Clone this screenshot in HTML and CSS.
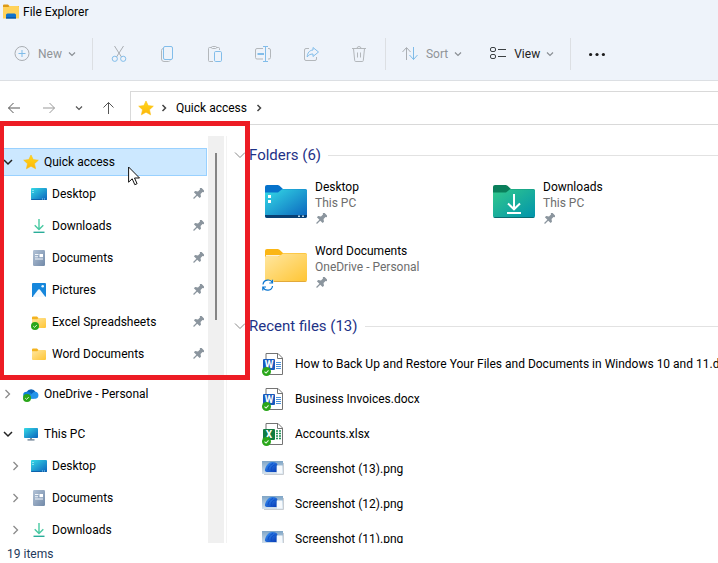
FILE: index.html
```html
<!DOCTYPE html>
<html lang="en">
<head>
    <meta charset="UTF-8">
    <meta name="viewport" content="width=device-width, initial-scale=1.0">
    <title>File Explorer</title>
    <link rel="stylesheet" href="styles.css">
</head>
<body>
    <!-- shared icons -->
    <svg class="sprite" aria-hidden="true">
        <defs>
            <linearGradient id="gBlue" x1="0" y1="0" x2="1" y2="1"><stop offset="0" stop-color="#35dbe6"/><stop offset="1" stop-color="#0a62bd"/></linearGradient>
            <linearGradient id="gGreen" x1="0" y1="0" x2="1" y2="1"><stop offset="0" stop-color="#33c98c"/><stop offset="1" stop-color="#0093ac"/></linearGradient>
            <linearGradient id="gYellow" x1="0" y1="0" x2="1" y2="1"><stop offset="0" stop-color="#ffe7a2"/><stop offset="1" stop-color="#ffc533"/></linearGradient>
            <linearGradient id="gDoc" x1="0" y1="0" x2="1" y2="1"><stop offset="0" stop-color="#b3c3d6"/><stop offset="1" stop-color="#7189a8"/></linearGradient>
            <linearGradient id="gStar" x1="0" y1="0" x2="0" y2="1"><stop offset="0" stop-color="#ffd91a"/><stop offset="1" stop-color="#fdb50a"/></linearGradient>
            <linearGradient id="gSky" x1="0" y1="0" x2="0" y2="1"><stop offset="0" stop-color="#7fa5c6"/><stop offset="1" stop-color="#d6e3ee"/></linearGradient>
            <linearGradient id="gBloom" x1="0" y1="0" x2="1" y2="1"><stop offset="0" stop-color="#3b97f7"/><stop offset="1" stop-color="#0638b4"/></linearGradient>
        </defs>
        <symbol id="down" viewBox="0 0 8 8"><path d="M1 2.5 4 5.5 7 2.5" fill="none" stroke="currentColor" stroke-width="1.2"/></symbol>
        <symbol id="right" viewBox="0 0 8 8"><path d="M2.5 1 5.5 4 2.5 7" fill="none" stroke="currentColor" stroke-width="1.5"/></symbol>
        <symbol id="open" viewBox="0 0 10 10"><path d="M1 3 5 7 9 3" fill="none" stroke="currentColor" stroke-width="1.5"/></symbol>
        <symbol id="closed" viewBox="0 0 10 10"><path d="M2.5 1 6.500 5 2.5 9" fill="none" stroke="currentColor" stroke-width="1.3"/></symbol>
        <symbol id="star" viewBox="0 0 16 16"><path d="M8 1 10.200 5.600 15.300 6.200 11.500 9.700 12.600 14.800 8 12.200 3.400 14.800 4.500 9.700.7 6.200 5.800 5.600z" fill="url(#gStar)" stroke="#fbc012" stroke-width=".6" stroke-linejoin="round"/></symbol>
        <symbol id="pin" viewBox="0 0 12 12"><path transform="rotate(45 6 6)" d="M3.3-.8h5.4v1.6l-.9.6v2.8l2.3 1.7v1.8H6.6v4.6H5.4V7.7H1.9V5.900l2.3-1.7V1.4L3.3.8z" fill="#8b959e"/></symbol>
        <symbol id="desktop" viewBox="0 0 16 16"><rect y="2" width="16" height="12" rx="1" fill="url(#gBlue)"/><path d="M0 13h16v0a1 1 0 0 1-1 1H1a1 1 0 0 1-1-1z" fill="#0d62ac"/><path d="M1.5 4h1v1h-1zM1.5 6h1v1h-1z" fill="#d8fbff"/><path d="M11 12.5h1v1h-1zM13 12.5h1v1h-1z" fill="#8fd0f5"/></symbol>
        <symbol id="downloads" viewBox="0 0 16 16"><path d="M8 1v10.500M3.700 7.200 8 11.400l4.300-4.200" fill="none" stroke="#48c9a2" stroke-width="1.4"/><path d="M2.5 13.600h11v1.400h-11z" fill="#29ad99"/></symbol>
        <symbol id="documents" viewBox="0 0 16 16"><rect x="2" width="12" height="16" rx="1.2" fill="url(#gDoc)"/><path d="M4 4h3.500v1H4zM4 6.200h3v1H4zM4 8.400h8v1H4z" fill="#f4f8fc"/><path d="M8.500 4H12v3.200H8.500z" fill="#fff"/></symbol>
        <symbol id="pictures" viewBox="0 0 16 16"><rect x="1" y="1" width="14" height="14" rx="1" fill="#1687dc"/><path d="M1.500 15 7.300 7.600a1 1 0 0 1 1.500 0L14.500 15z" fill="#f4faff"/><path d="M1 13.500V14a1 1 0 0 0 1 1h.5z" fill="#0b5cad"/><circle cx="11.700" cy="4.300" r="1.300" fill="#e9f5ff"/></symbol>
        <symbol id="folder" viewBox="0 0 16 16"><path d="M1 3.500a1 1 0 0 1 1-1h4L7.500 4H14v3H1z" fill="#f4b31f"/><path d="M1 5.200h5.200l1.300-1.100H14a1 1 0 0 1 1 1V13a1 1 0 0 1-1 1H2a1 1 0 0 1-1-1z" fill="url(#gYellow)"/></symbol>
        <symbol id="synced" viewBox="0 0 8 8"><circle cx="4" cy="4" r="4" fill="#2aa61a"/><path d="M2.200 4.100 3.600 5.400 5.800 3" fill="none" stroke="#e4f8df" stroke-width=".9"/></symbol>
        <symbol id="cloud" viewBox="0 0 16 16"><path d="M3.600 6A5 5 0 0 1 12.600 6L9 9.500z" fill="#0a62b8"/><path d="M3.500 12.500A3.300 3.300 0 0 1 3.600 5.800c1.800-.4 3.200.5 4 1.200l4 5.500z" fill="#1180dc"/><path d="M3 12.700 9.600 7a4 4 0 0 1 2.700-1.200A3.500 3.500 0 0 1 12.700 12.700z" fill="#2494ea"/></symbol>
        <symbol id="pc" viewBox="0 0 16 16"><rect x="1" y="2" width="14" height="10" rx=".8" fill="url(#gBlue)"/><path d="M7 12h2v1.500H7z" fill="#8593a1"/><path d="M4.500 13.300h7v1.200h-7z" fill="#5b7186"/></symbol>
        <symbol id="page" viewBox="0 0 22 24"><path d="M4 1.500h12l4.500 4.500v16.500H4z" fill="#fff" stroke="#747474"/><path d="M15.500 1.500v5h5" fill="none" stroke="#747474"/></symbol>
        <symbol id="shot" viewBox="0 0 22 24"><path d="M2 17.500h19.500V6" fill="none" stroke="#c9cdd2"/><rect y="4" width="21" height="13" fill="url(#gSky)"/><path d="M15 8.500h5.500v8H15z" fill="#f7fafd"/><path d="M3 12.500C4 8 7 5.200 10 5c3-.2 5 .8 5.500 2.500L14.500 9v6H5c-1.500 0-2.400-1-2-2.500z" fill="url(#gBloom)"/><path d="M9.500 14c-1-3 1-6 4-6M6 13c0-3 2-5.500 5-6.500" fill="none" stroke="#0a49c4" stroke-width=".8"/></symbol>
    </svg>

    <div class="window">
        <header class="top">
            <div class="titlebar">
                <svg class="icon" viewBox="0 0 16 16"><path d="M0 1.500a1 1 0 0 1 1-1h4L6.500 2H16v5H0z" fill="#dd9a17"/><path d="M0 3h5.500l1-1H15a1 1 0 0 1 1 1v11.500H0z" fill="#ffd25a"/><path d="M3 14.500V11a1.500 1.500 0 0 1 1.500-1.500h7A1.500 1.500 0 0 1 13 11v3.500z" fill="#0f74cf"/><path d="M3 13h10v1.500H3z" fill="#0a5bb0"/></svg>
                <span>File Explorer</span>
            </div>
            <div class="toolbar">
                <button class="command dim">
                    <svg class="icon" viewBox="0 0 16 16" fill="none"><circle cx="8" cy="7.500" r="7" stroke="#a9adb2"/><path d="M8 4v7M4.500 7.500h7" stroke="#7fbbe8"/></svg>
                    New
                    <svg class="chevron"><use href="#down"/></svg>
                </button>
                <span class="separator"></span>
                <button class="tool" aria-label="Cut"><svg class="icon" viewBox="0 0 16 16" fill="none"><path d="M3.500 0 10.500 11M12.500 0 5.500 11" stroke="#a9adb2"/><circle cx="3.800" cy="12.800" r="2.600" stroke="#82bdea"/><circle cx="12.200" cy="12.800" r="2.600" stroke="#82bdea"/></svg></button>
                <button class="tool" aria-label="Copy"><svg class="icon" viewBox="0 0 16 16" fill="none"><path d="M4 2.500a2 2 0 0 0-1.500 2V13a2.500 2.500 0 0 0 2.500 2.500h4.500a2 2 0 0 0 1.700-1" stroke="#b3b7bb"/><rect x="4.500" y=".5" width="9" height="13" rx="1.500" stroke="#82bdea"/></svg></button>
                <button class="tool" aria-label="Paste"><svg class="icon" viewBox="0 0 16 16" fill="none"><path d="M4.500 1.500h-2a1 1 0 0 0-1 1v12a1 1 0 0 0 1 1H6M9.500 1.500h2a1 1 0 0 1 1 1V4" stroke="#b3b7bb"/><rect x="4.500" y=".5" width="5" height="2" rx="1" stroke="#b3b7bb"/><rect x="7.500" y="5.500" width="7" height="10" rx="1.200" stroke="#82bdea"/></svg></button>
                <button class="tool" aria-label="Rename"><svg class="icon" viewBox="0 0 16 16" fill="none"><path d="M8 2.500H2A1.500 1.500 0 0 0 .5 4v7.500A1.500 1.500 0 0 0 2 13h6M13 2.500h1A1.500 1.500 0 0 1 15.500 4v7.500A1.500 1.500 0 0 1 14 13h-1" stroke="#b3b7bb"/><path d="M10.500.5v15M8 .5h5M8 15.500h5" stroke="#82bdea"/><path d="M2.500 8H9" stroke="#82bdea" stroke-width="2"/></svg></button>
                <button class="tool" aria-label="Share"><svg class="icon" viewBox="0 0 16 16" fill="none"><path d="M6 2.500H3A1.500 1.500 0 0 0 1.500 4v9A1.500 1.500 0 0 0 3 14.500h9a1.500 1.500 0 0 0 1.500-1.500v-2" stroke="#b3b7bb"/><path d="M10 1.500 15.500 6 10 10.500V8C7 8 5.500 9 4.200 11 4.300 7 6.500 4.200 10 4z" stroke="#82bdea" stroke-linejoin="round"/></svg></button>
                <button class="tool" aria-label="Delete"><svg class="icon" viewBox="0 0 16 16" fill="none" stroke="#b3b7bb"><path d="M1 2.500h14M6 2.500a2 2 0 0 1 4 0M2.500 2.500l1.200 12a1 1 0 0 0 1 1h6.600a1 1 0 0 0 1-1l1.200-12M6.500 6.500v5M9.500 6.500v5"/></svg></button>
                <span class="separator"></span>
                <button class="command dim">
                    <svg class="icon" viewBox="0 0 16 16" fill="none"><path d="M4.500 14V2M.5 6l4-4.500 4 4.500" stroke="#a9adb2"/><path d="M11.500 1v12.500M7.500 9l4 4.500 4-4.500" stroke="#7fbbe8"/></svg>
                    Sort
                    <svg class="chevron"><use href="#down"/></svg>
                </button>
                <button class="command">
                    <svg class="icon" viewBox="0 0 16 16" fill="none" stroke="#3c4043"><rect x=".5" y="1.500" width="5" height="4" rx="1.500"/><rect x=".5" y="8.500" width="5" height="4" rx="1.500"/><path d="M8 3.500h8M8 10.500h8"/></svg>
                    View
                    <svg class="chevron"><use href="#down"/></svg>
                </button>
                <span class="separator"></span>
                <button class="tool" aria-label="See more"><svg class="icon" viewBox="0 0 16 16" fill="#1b1b1b"><circle cx="1.600" cy="8.500" r="1.600"/><circle cx="8" cy="8.500" r="1.600"/><circle cx="14.400" cy="8.500" r="1.600"/></svg></button>
            </div>
        </header>

        <nav class="navbar">
            <button aria-label="Back"><svg class="icon" viewBox="0 0 16 16" fill="none" stroke="#555"><path d="M14 8H2.500M7.500 3l-5 5 5 5"/></svg></button>
            <button aria-label="Forward"><svg class="icon" viewBox="0 0 16 16" fill="none" stroke="#999"><path d="M2 8h11.500M8.500 3l5 5-5 5"/></svg></button>
            <button aria-label="Recent locations"><svg class="chevron"><use href="#down"/></svg></button>
            <button aria-label="Up"><svg class="icon" viewBox="0 0 16 16" fill="none" stroke="#555"><path d="M8.500 14V2.500M3.500 7.500l5-5 5 5"/></svg></button>
            <div class="address">
                <svg class="icon"><use href="#star"/></svg>
                <svg class="chevron"><use href="#right"/></svg>
                <a href="#">Quick access</a>
                <svg class="chevron"><use href="#right"/></svg>
            </div>
        </nav>

        <div class="panes">
            <aside class="sidebar">
                <ul class="tree">
                    <li><a class="row selected" href="#"><svg class="twisty dark"><use href="#open"/></svg><svg class="icon"><use href="#star"/></svg>Quick access</a></li>
                    <li><a class="row child" href="#"><svg class="twisty"></svg><svg class="icon"><use href="#desktop"/></svg>Desktop<svg class="pin"><use href="#pin"/></svg></a></li>
                    <li><a class="row child" href="#"><svg class="twisty"></svg><svg class="icon"><use href="#downloads"/></svg>Downloads<svg class="pin"><use href="#pin"/></svg></a></li>
                    <li><a class="row child" href="#"><svg class="twisty"></svg><svg class="icon"><use href="#documents"/></svg>Documents<svg class="pin"><use href="#pin"/></svg></a></li>
                    <li><a class="row child" href="#"><svg class="twisty"></svg><svg class="icon"><use href="#pictures"/></svg>Pictures<svg class="pin"><use href="#pin"/></svg></a></li>
                    <li><a class="row child" href="#"><svg class="twisty"></svg><svg class="icon" viewBox="0 0 16 16"><use href="#folder"/><use href="#synced" x="0" y="8" width="8" height="8"/></svg>Excel Spreadsheets<svg class="pin"><use href="#pin"/></svg></a></li>
                    <li><a class="row child" href="#"><svg class="twisty"></svg><svg class="icon"><use href="#folder"/></svg>Word Documents<svg class="pin"><use href="#pin"/></svg></a></li>
                </ul>
                <ul class="tree">
                    <li><a class="row" href="#"><svg class="twisty"><use href="#closed"/></svg><svg class="icon" viewBox="0 0 16 16"><use href="#cloud"/><use href="#synced" x="0" y="8" width="8" height="8"/></svg>OneDrive - Personal</a></li>
                </ul>
                <ul class="tree">
                    <li><a class="row" href="#"><svg class="twisty dark"><use href="#open"/></svg><svg class="icon"><use href="#pc"/></svg>This PC</a></li>
                    <li><a class="row child" href="#"><svg class="twisty"><use href="#closed"/></svg><svg class="icon"><use href="#desktop"/></svg>Desktop</a></li>
                    <li><a class="row child" href="#"><svg class="twisty"><use href="#closed"/></svg><svg class="icon"><use href="#documents"/></svg>Documents</a></li>
                    <li><a class="row child" href="#"><svg class="twisty"><use href="#closed"/></svg><svg class="icon"><use href="#downloads"/></svg>Downloads</a></li>
                </ul>
            </aside>
            <div class="scrollbar"><div class="thumb"></div></div>

            <main class="content">
                <h2 class="group"><svg class="fold" viewBox="0 0 12 12"><path d="M1 3.500 6 8.500 11 3.500" fill="none" stroke="#8a8a8a"/></svg>Folders (6)</h2>
                <div class="tiles">
                    <a class="tile" href="#">
                        <svg class="thumbnail" viewBox="0 0 48 48"><path d="M4 8a2 2 0 0 1 2-2h10.500a3 3 0 0 1 2 .8L22 10h22a2 2 0 0 1 2 2v8H4z" fill="#0672cb"/><path d="M4 13.500h13l4-3.200h23.500A1.500 1.500 0 0 1 46 11.800V37a2 2 0 0 1-2 2H6a2 2 0 0 1-2-2z" fill="url(#gBlue)"/><path d="M4 36h42v1a2 2 0 0 1-2 2H6a2 2 0 0 1-2-2z" fill="#083f73"/><path d="M7 16h3v3H7zM7 21h3v3H7z" fill="#fff"/><path d="M37 36.500h2v1.500h-2zM41 36.500h2v1.500h-2z" fill="#b9d9ee"/></svg>
                        <span class="details"><span>Desktop</span><span class="place">This PC</span><svg class="pin"><use href="#pin"/></svg></span>
                    </a>
                    <a class="tile" href="#">
                        <svg class="thumbnail" viewBox="0 0 48 48"><path d="M4 8a2 2 0 0 1 2-2h10.500a3 3 0 0 1 2 .8L22 10h22a2 2 0 0 1 2 2v8H4z" fill="#0a7f5b"/><path d="M4 13.500h13l4-3.200h23.500A1.500 1.500 0 0 1 46 11.800V37a2 2 0 0 1-2 2H6a2 2 0 0 1-2-2z" fill="url(#gGreen)"/><path d="M4.500 38h41L44 39H6z" fill="#0a6b70"/><path d="M25 15v15M19 24.500l6 5.800 6-5.800M18 34h14" fill="none" stroke="#fff" stroke-width="2"/></svg>
                        <span class="details"><span>Downloads</span><span class="place">This PC</span><svg class="pin"><use href="#pin"/></svg></span>
                    </a>
                    <a class="tile" href="#">
                        <svg class="thumbnail" viewBox="0 0 48 48"><path d="M4 8a2 2 0 0 1 2-2h10.500a3 3 0 0 1 2 .8L22 10h22a2 2 0 0 1 2 2v8H4z" fill="#fbb614"/><path d="M4 13.500h14l4-3h22.500A1.500 1.500 0 0 1 46 12V37a2 2 0 0 1-2 2H6a2 2 0 0 1-2-2z" fill="url(#gYellow)"/><path d="M5 13.500h12l3-1.500H5z" fill="#fff" opacity=".8"/><path d="M4.500 38h41L44 39H6z" fill="#e2a93a"/><rect x="1" y="37.500" width="11.500" height="10" fill="#fff"/><path d="M2 41.500c.5-5 7.500-6 9.300-2M11.500 36.800V40H8.300M11.500 43c-.5 5-7.500 5.500-9.300 1.500M1.800 47.500V44H5" fill="none" stroke="#0b76d1" stroke-width="1.200"/></svg>
                        <span class="details"><span>Word Documents</span><span class="place">OneDrive - Personal</span><svg class="pin"><use href="#pin"/></svg></span>
                    </a>
                </div>

                <h2 class="group"><svg class="fold" viewBox="0 0 12 12"><path d="M1 3.500 6 8.500 11 3.500" fill="none" stroke="#8a8a8a"/></svg>Recent files (13)</h2>
                <ul class="files">
                    <li><a class="file" href="#"><svg class="type" viewBox="0 0 22 24"><use href="#page"/><path d="M14 10.500h5M14 12.500h5M14 14.500h5M14 16.500h5" stroke="#4a90d9"/><rect x="1" y="7" width="12" height="11" rx="1" fill="#185abd"/><text x="7" y="16">W</text><use href="#synced" x="0" y="15" width="9" height="9"/></svg>How to Back Up and Restore Your Files and Documents in Windows 10 and 11.docx</a></li>
                    <li><a class="file" href="#"><svg class="type" viewBox="0 0 22 24"><use href="#page"/><path d="M14 10.500h5M14 12.500h5M14 14.500h5M14 16.500h5" stroke="#4a90d9"/><rect x="1" y="7" width="12" height="11" rx="1" fill="#185abd"/><text x="7" y="16">W</text><use href="#synced" x="0" y="15" width="9" height="9"/></svg>Business Invoices.docx</a></li>
                    <li><a class="file" href="#"><svg class="type" viewBox="0 0 22 24"><use href="#page"/><path d="M14 9h2M17 9h2M14 11.500h2M17 11.500h2M14 14h2M17 14h2M14 16.500h2M17 16.500h2" stroke="#21935a" stroke-width="1.500"/><rect x="1" y="7" width="12" height="11" rx="1" fill="#107c41"/><text x="7" y="16">X</text><use href="#synced" x="0" y="15" width="9" height="9"/></svg>Accounts.xlsx</a></li>
                    <li><a class="file" href="#"><svg class="type"><use href="#shot"/></svg>Screenshot (13).png</a></li>
                    <li><a class="file" href="#"><svg class="type"><use href="#shot"/></svg>Screenshot (12).png</a></li>
                    <li><a class="file" href="#"><svg class="type"><use href="#shot"/></svg>Screenshot (11).png</a></li>
                </ul>
            </main>
        </div>

        <footer class="status">19 items</footer>

        <div class="highlight"></div>
        <svg class="cursor" viewBox="0 0 13 20"><path d="M.6 1v15.200l3.600-3.400 2.600 5.900 2.300-1-2.600-5.700h5z" fill="#fff" stroke="#111" stroke-linejoin="round"/></svg>
    </div>
</body>
</html>
```

FILE: styles.css
```css
* { box-sizing: border-box; }
body { margin: 0; background: #fff; color: #000; font-family: Roboto, "Open Sans", sans-serif; font-size: 12px; line-height: 16px; }
a { color: inherit; text-decoration: none; }
ul { list-style: none; margin: 0; padding: 0; }
button { display: flex; align-items: center; justify-content: center; padding: 0; border: none; background: none; font: inherit; color: inherit; }
svg { display: block; flex: none; }
.sprite { position: absolute; width: 0; height: 0; }
.icon { width: 16px; height: 16px; }
.chevron { width: 8px; height: 8px; }
.pin { width: 12px; height: 12px; }

.window { position: relative; display: flex; flex-direction: column; height: 100vh; overflow: hidden; }

/* title and command bar */
.top { background: #eef3fa; border-bottom: 1px solid #dcdfe3; }
.titlebar { display: flex; align-items: center; gap: 4px; height: 24px; padding-left: 3px; }
.toolbar { display: flex; align-items: center; height: 56px; padding: 8px 0 4px; }
.command { gap: 8px; height: 32px; padding: 0 14px; color: #222; }
.command .chevron { margin-left: -2px; color: #8a8f94; }
.dim { color: #909498; }
.tool { width: 48px; height: 32px; }
.separator { width: 1px; height: 32px; margin: 0 2px; background: #dcdfe3; }

/* address row */
.navbar { display: grid; grid-template-columns: 28px 42px 18px 40px 1fr; align-items: center; padding-top: 10px; color: #555; }
.address { display: flex; align-items: center; gap: 8px; height: 34px; margin-left: 2px; padding-left: 7px; border: 1px solid #d9d9d9; border-right: none; color: #000; }
.address .chevron { color: #444; }
.address .icon { margin-right: -2px; }

/* panes */
.panes { display: flex; flex: 1; min-height: 0; margin-top: 11px; }
.sidebar { width: 208px; padding-top: 10px; overflow: hidden; }
.tree { margin-bottom: 8px; }
.tree li { padding: 2px 0; }
.row { display: flex; align-items: center; gap: 5px; height: 28px; margin-right: 1px; border: 1px solid transparent; border-left: none; white-space: nowrap; }
.child { padding-left: 8px; }
.selected { background: #cce8ff; border-color: #99d1ff; }
.twisty { width: 10px; height: 10px; margin: 0 5px 0 3px; color: #8a8a8a; }
.dark { color: #222; }
.row .pin { margin-left: auto; margin-right: 2px; }
.scrollbar { width: 16px; padding-top: 17px; background: #f0f0f0; }
.thumb { width: 2px; height: 167px; margin: 0 auto; background: #858585; }

.content { flex: 1; min-width: 0; margin-left: 2px; padding-top: 7px; border-left: 1px solid #f3f3f3; overflow: hidden; }
.group { display: flex; align-items: center; gap: 3px; height: 24px; margin: 0 0 4px; padding-left: 7px; font-size: 15px; font-weight: normal; color: #1e3287; }
.group::after { content: ""; flex: 1; height: 1px; margin-left: 4px; background: #e2e2e2; }
.fold { width: 12px; height: 12px; }
.tiles { display: grid; grid-template-columns: repeat(auto-fill, 228px); margin-bottom: 15px; padding-left: 34px; }
.tile { display: flex; align-items: center; gap: 6px; height: 64px; }
.thumbnail { width: 48px; height: 48px; }
.details { display: flex; flex-direction: column; }
.details .pin { margin: 2px 0; }
.place { color: #6d6d6d; }
.files { padding: 4px 0 0 35px; }
.file { display: flex; align-items: center; gap: 11px; height: 35px; white-space: nowrap; }
.type { width: 22px; height: 24px; }
.type text { fill: #fff; font: bold 10px Roboto, sans-serif; text-anchor: middle; }

.status { height: 20px; padding: 3px 7px 0; color: #1e395b; }

/* callout around the quick access list */
.highlight { position: absolute; left: 0; top: 121px; width: 250px; height: 259px; border: 5px solid #ed1c24; border-left-width: 4px; }
.cursor { position: absolute; left: 128px; top: 166px; width: 13px; height: 20px; }
```
